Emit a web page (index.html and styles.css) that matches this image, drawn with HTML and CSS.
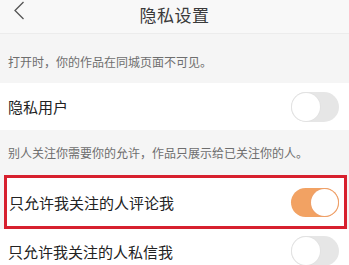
FILE: index.html
```html
<!DOCTYPE html>
<html lang="zh">
<head>
<meta charset="UTF-8" />
<meta name="viewport" content="width=device-width,initial-scale=1" />
<title>隐私设置</title>
<link rel="stylesheet" href="styles.css">
</head>
<body>

<!-- HEADER -->
<div class="top-bar">
  <a href="#" class="back">
    <svg width="12" height="19" viewBox="0 0 12 19"><path d="M10.5 1 L2 9.5 L10.5 18" fill="none" stroke="#555" stroke-width="1.3"/></svg>
  </a>
  <h1>隐私设置</h1>
</div>

<div class="tip tip-first">打开时，你的作品在同城页面不可见。</div>

<div class="row">
  <span>隐私用户</span>
  <div class="switch"></div>
</div>

<div class="tip">别人关注你需要你的允许，作品只展示给已关注你的人。</div>

<div class="row row-marked">
  <span>只允许我关注的人评论我</span>
  <div class="switch on"></div>
</div>

<div class="row row-last">
  <span>只允许我关注的人私信我</span>
  <div class="switch"></div>
</div>

</body>
</html>
```

FILE: styles.css
```css
*{box-sizing:border-box;margin:0;padding:0;
  font-family:"Noto Sans CJK SC","Noto Sans",sans-serif}

body{background:#f5f5f5;overflow:hidden}

.top-bar{
  height:34px;
  background:#f8f8f8;
  border-bottom:1px solid #ececec;
  display:flex;align-items:center;justify-content:center;
  position:relative;
}
.top-bar h1{font-size:17px;font-weight:400;color:#3a3a3a;letter-spacing:.5px;margin-top:-4px}
.back{position:absolute;left:13px;top:1px;display:flex}

.tip{
  height:45px;
  display:flex;align-items:center;
  padding:0 8px;
  font-size:12px;color:#6e6e6e;
}
.tip-first{height:48px;margin-top:1px;padding-top:4px}

.row{
  background:#fff;
  height:47px;
  display:flex;align-items:center;justify-content:space-between;
  padding:0 10px 0 8px;
  font-size:15px;color:#222;
}
.row-marked{
  height:54px;
  margin:0 2px 0 4px;
  border:3px solid #d7202e;
  padding:0 5px 0 2px;
}
.row-last{height:40px;padding-top:4px}

/* toggle */
.switch{
  width:48px;height:30px;border-radius:15px;
  background:#e6e6e6;
  position:relative;
}
.switch::after{
  content:"";position:absolute;left:1px;top:1px;
  width:28px;height:28px;border-radius:50%;
  background:#fff;
  box-shadow:0 0 0 1px #e2e2e2;
}
.switch.on{background:#f2a263;height:29px}
.switch.on::after{left:auto;right:1px;top:1px;width:27px;height:27px;box-shadow:0 0 0 1px #eea06a}
```
